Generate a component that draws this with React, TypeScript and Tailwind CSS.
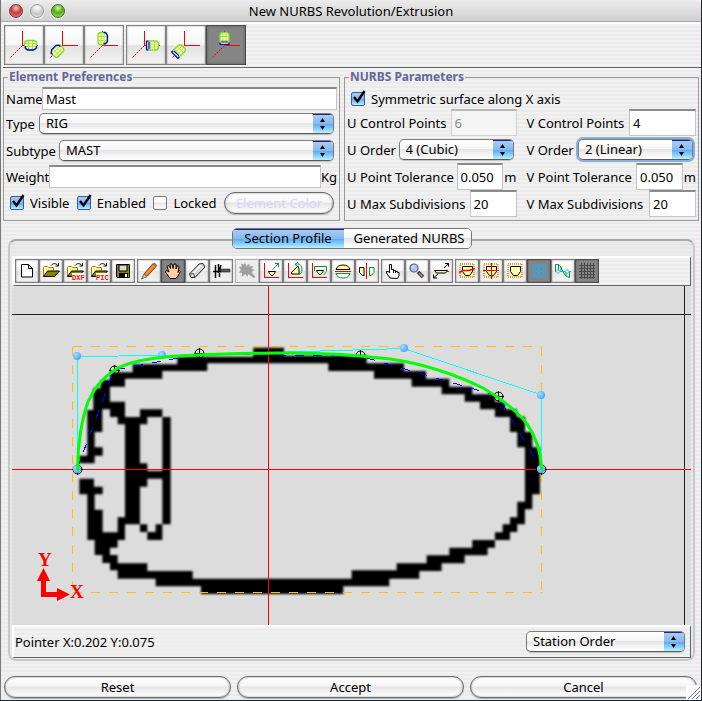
import React, { useState } from "react";

const GLOSS =
  "bg-[linear-gradient(to_bottom,#ffffff_0%,#f6f6f6_45%,#e4e4e4_50%,#f4f4f4_75%,#ffffff_100%)]";
const AQUA =
  "bg-[linear-gradient(to_bottom,#a9cbf0_0%,#86b9f0_48%,#62aaf2_52%,#8cd0ff_78%,#b4f4ff_100%)]";

/* ---------- small form parts ---------- */

function Field({
  label,
  value,
  box,
  unit,
  disabled,
}: {
  label: string;
  value: string;
  box: string;
  unit?: string;
  disabled?: boolean;
}) {
  return (
    <label className="flex h-[27px] items-center justify-between">
      <span className="whitespace-nowrap">{label}</span>
      <span className={`flex h-full items-center ${box}`}>
        <input
          type="text"
          defaultValue={value}
          disabled={disabled}
          className={`h-full w-full min-w-0 flex-1 border border-t-2 px-[3px] pb-px outline-none ${
            disabled
              ? "border-[#d0d0d0] border-t-[#b8b8b8] bg-[#f5f5f5] text-[#8a8a8a]"
              : "border-[#c4c4c4] border-t-[#8a8a8a] bg-white text-black"
          }`}
        />
        {unit && <span className="pl-px">{unit}</span>}
      </span>
    </label>
  );
}

function Popup({
  label,
  options,
  box,
  focused,
}: {
  label: string;
  options: string[];
  box: string;
  focused?: boolean;
}) {
  return (
    <span
      className={`relative flex h-[21px] overflow-hidden rounded-[5px] border border-[#7c7c7c] border-b-[#5a5a5a] ${GLOSS} ${box} ${
        focused ? "ring-2 ring-[#86aede]" : "shadow-[0_1px_1px_rgba(0,0,0,0.2)]"
      }`}
    >
      <select
        aria-label={label}
        className="h-full w-full appearance-none bg-transparent pl-[6px] pr-6 pb-px leading-[18px] outline-none"
      >
        {options.map((o) => (
          <option key={o}>{o}</option>
        ))}
      </select>
      <span
        className={`pointer-events-none absolute inset-y-0 right-0 w-5 border-t border-[#23238a] ${AQUA}`}
      >
        <svg viewBox="0 0 20 18" className="h-[18px] w-5">
          <path d="M9.500 3l2.500 4h-5zM9.500 15l2.500 -4h-5z" fill="#000" />
        </svg>
      </span>
    </span>
  );
}

function Check({ label, on }: { label: string; on?: boolean }) {
  const [checked, setChecked] = useState(!!on);
  return (
    <label className="flex items-center gap-[6px]">
      <span className="relative h-[14px] w-[14px]">
        <input
          type="checkbox"
          checked={checked}
          onChange={() => setChecked(!checked)}
          className={`block h-[14px] w-[14px] appearance-none rounded-[2px] border ${
            checked ? `border-[#3c5c90] ${AQUA}` : `border-[#777777] ${GLOSS}`
          }`}
        />
        {checked && (
          <svg
            viewBox="0 0 16 16"
            className="pointer-events-none absolute -top-[2px] left-0 h-4 w-4"
          >
            <path d="M3 7l3.500 4.500L13.500 1" fill="none" stroke="#000" strokeWidth="2.400" />
          </svg>
        )}
      </span>
      <span className="whitespace-nowrap">{label}</span>
    </label>
  );
}

function Panel({ title, children }: { title: string; children: React.ReactNode }) {
  return (
    <fieldset className="h-[152px] min-w-0 border border-[#999999] px-[2px]">
      <legend className="ml-[2px] px-px text-[12px] font-bold leading-4 text-[#666699]">{title}</legend>
      {children}
    </fieldset>
  );
}

function PushButton({ children, className = "" }: { children: React.ReactNode; className?: string }) {
  return (
    <button
      type="button"
      className={`h-[22px] rounded-full border border-[#6a6a6a] pb-px leading-[18px] shadow-[inset_0_0_2px_#888,0_1px_1px_rgba(0,0,0,0.25)] ${GLOSS} ${className}`}
    >
      {children}
    </button>
  );
}

/* ---------- revolution / extrusion tools ---------- */

function Axes({
  bx,
  by,
  rot,
  cap,
}: {
  bx: number;
  by: number;
  rot: number;
  cap: "side" | "end";
}) {
  return (
    <svg viewBox="1 1 38 38" className="h-full w-full">
      <path d="M18.500 6v15M18.500 20.500H34" stroke="#f00" fill="none" shapeRendering="crispEdges" />
      <path d="M18.500 20.500L6 33" stroke="#f00" strokeDasharray="2 1" />
      <g transform={`translate(${bx} ${by}) rotate(${rot})`}>
        <rect x="-6" y="-4.500" width="12" height="9" rx="3" fill="#ffffa8" stroke="#7ddc28" strokeWidth="1.300" />
        <path d="M-5 -1.500H5M-5 1.500H5M-2 -4V4M2 -4V4" stroke="#8fe040" strokeWidth="0.800" />
        {cap === "side" ? (
          <path d="M-5 1v2l2 2h6l3 -2v-2" stroke="#0000ee" fill="none" strokeWidth="1.300" />
        ) : (
          <path d="M-4 -4.500h-2v9h2M-3.500 -3.500v7" stroke="#0000ee" fill="none" strokeWidth="1.200" />
        )}
      </g>
    </svg>
  );
}

function ShapeTool({
  label,
  on,
  children,
}: {
  label: string;
  on?: boolean;
  children: React.ReactNode;
}) {
  return (
    <button
      type="button"
      aria-label={label}
      aria-pressed={!!on}
      className={`h-10 w-10 border ${
        on
          ? "border-[#4c4c4c] bg-[#858585] shadow-[inset_0_0_3px_#555]"
          : "border-[#828282] bg-[linear-gradient(to_bottom,#ffffff,#f6f6f6_50%,#e2e2e2_52%,#f4f4f4)] shadow-[inset_0_0_2px_#999]"
      }`}
    >
      {children}
    </button>
  );
}

/* ---------- drawing tools ---------- */

function Tool({
  label,
  on,
  disabled,
  children,
}: {
  label: string;
  on?: boolean;
  disabled?: boolean;
  children: React.ReactNode;
}) {
  return (
    <button
      type="button"
      aria-label={label}
      aria-pressed={!!on}
      disabled={disabled}
      className={`h-6 w-6 border ${
        on
          ? "border-[#4c4c4c] bg-[#858585] shadow-[inset_0_0_2px_#555]"
          : disabled
            ? "border-[#b0b0b0] bg-[#ececec]"
            : "border-[#7c7c7c] bg-[linear-gradient(to_bottom,#ffffff,#f6f6f6_50%,#e6e6e6_52%,#f4f4f4)] shadow-[inset_0_0_2px_#888]"
      }`}
    >
      <svg viewBox="1 1 22 22" className="h-full w-full">
        {children}
      </svg>
    </button>
  );
}

const Folder = () => (
  <g>
    <path d="M4.500 17.500v-9l1 -1h3l1 1h5v3" fill="#ffff9c" stroke="#8c8c00" />
    <path d="M4.500 17.500l4 -5.500h12l-5 5.500z" fill="#848400" stroke="#000" />
    <path d="M12 6.500c2 -2.500 5 -2.500 7 0M19.500 4v3h-3" fill="none" stroke="#000" />
  </g>
);

const Tag = ({ children }: { children: string }) => (
  <g>
    <rect x="9" y="14" width="12" height="7" fill="#fff" />
    <text x="9" y="20.500" fontSize="7" fontWeight="bold" fontFamily="Liberation Mono, monospace" fill="#f00">
      {children}
    </text>
  </g>
);

const RedAxes = () => (
  <path d="M5.500 4v14.500H20" fill="none" stroke="#f00" shapeRendering="crispEdges" />
);

const Shield = () => (
  <g>
    <rect x="5" y="5" width="14" height="13" fill="none" stroke="#f0a020" strokeWidth="2" strokeDasharray="1 1" />
    <path d="M7.500 7.500h10v5l-3 4h-4l-3 -4z" fill="#ffff9c" stroke="#000" />
  </g>
);

function DrawingTools() {
  return (
    <div role="toolbar" aria-label="Drawing tools" className="flex gap-[2px]">
      <div className="flex">
        <Tool label="New">
          <path d="M6.500 5.500h7l4 4v8.500h-11zM13.500 5.500v4h4" fill="#fff" stroke="#000" />
        </Tool>
        <Tool label="Open"><Folder /></Tool>
        <Tool label="Import DXF"><Folder /><Tag>DXF</Tag></Tool>
        <Tool label="Import picture"><Folder /><Tag>PIC</Tag></Tool>
        <Tool label="Save">
          <path d="M5.500 5.500h13v13h-12l-1 -1z" fill="#848400" stroke="#000" />
          <path d="M8 6h8v6h-8z" fill="#d8d8d8" stroke="#000" />
          <path d="M8 14h9v4.500h-9z" fill="#000" />
          <path d="M14 15h2v3h-2z" fill="#fff" />
        </Tool>
      </div>
      <div className="flex">
        <Tool label="Pencil">
          <path d="M7 15L16 4.500l3 3L10 17.500z" fill="#e87818" stroke="#8a4a20" />
          <path d="M9 15.500L17 6.500" stroke="#ffb060" />
          <path d="M7 15l-2.500 5l5.500 -2.500z" fill="#e8d0a0" stroke="#666" />
          <path d="M16 4.500l1.500 -1l3 3l-1.500 1z" fill="#707888" />
        </Tool>
        <Tool label="Pan" on>
          <path
            d="M9 19.500l-4.500 -6.500l1 -1.500l2.500 1.500l-2 -5.500l1.500 -1l2 3l-.5 -4.500h2l1 4.500l1 -4.500h2l0 5l1.500 -3.500l1.500 1l-1 6l1.500 -2l1 1l-2.500 4.500l-2 2.500z"
            fill="#ffd0a8"
            stroke="#000"
          />
        </Tool>
        <Tool label="Eraser">
          <path d="M4.500 15L14 5l4 -.5l2 3.500L10 18.500h-4z" fill="#d8d8dc" stroke="#222" />
          <path d="M4.500 15l4 -.5l1.500 4" fill="none" stroke="#555" />
          <path d="M8.500 13.500L16 6" stroke="#fff" strokeWidth="1.500" />
        </Tool>
        <Tool label="Measure">
          <path d="M10 10h11v3h-11z" fill="#555" stroke="#222" strokeWidth="0.600" />
          <path d="M4 12.500h8M6.500 6v13M9.500 5v9M12 6l-1.500 5M10.500 14v4" stroke="#000" strokeWidth="1.500" fill="none" />
        </Tool>
      </div>
      <div className="flex">
        <Tool label="Spray" disabled>
          <path d="M10 4l1.500 3l3 -2.500l0 3l4 -.5l-2 3l3 1l-3 2l4 5l-2 1l-5 -4l-1 3l-2 -3l-4 3l.5 -4l-3 -.5l2 -2.500l-2 -3l3 -.5l-1 -3l3 1z" fill="#a0a0a0" />
        </Tool>
        <Tool label="Scale">
          <RedAxes />
          <path d="M9.500 12.500h7l-1 2l-2 2h-1l-2 -2z" fill="#ffff9c" stroke="#000" />
          <path d="M13.500 10.500l6 -6M16 4.500h3.500v3.500" fill="none" stroke="#009a30" />
        </Tool>
        <Tool label="Rotate">
          <RedAxes />
          <path d="M8 14l7 -7l1 3v5h-7z" fill="#ffff9c" stroke="#000" />
          <path d="M12 5.500c4 -2 7 1 7 5c0 3 -1 4 -3 5M15 3l-3 2.500l3 2" fill="none" stroke="#009a30" />
        </Tool>
        <Tool label="Offset">
          <RedAxes />
          <path d="M7.500 12v-4.500h12v5l-3 3.500" fill="none" stroke="#009a30" />
          <path d="M9.500 11.500h7l-1 2l-2 2h-1l-2 -2z" fill="#ffff9c" stroke="#000" />
        </Tool>
        <Tool label="Mirror vertically">
          <path d="M5 10.500c1 -6 13 -6 14 0z" fill="#ffff9c" stroke="#000" />
          <path d="M5 14.500h14c-1 6 -13 6 -14 0z" fill="#fff" stroke="#009a30" />
          <path d="M4 12.500h16" stroke="#f00" />
        </Tool>
        <Tool label="Mirror horizontally">
          <path d="M4.500 8.500h4.500v8h-1.500l-3 -3z" fill="#ffff9c" stroke="#000" />
          <path d="M14.500 8.500h4.500v5l-3 3h-1.500z" fill="#fff" stroke="#009a30" />
          <path d="M11.500 4v16" stroke="#f00" />
        </Tool>
      </div>
      <div className="flex">
        <Tool label="Select">
          <path d="M9 19l-3.500 -5v-1.500h2l1 1.500v-8.500h2v5h2v1h2v1h2v1h1.500v3l-1.500 3z" fill="#fff" stroke="#000" />
          <path d="M12.500 11v3M14.500 12v2" stroke="#000" />
        </Tool>
        <Tool label="Zoom">
          <path d="M13 13l5 5" stroke="#333" strokeWidth="3.500" />
          <path d="M14 14l3.500 3.500" stroke="#d09850" strokeWidth="1.500" />
          <circle cx="9" cy="9" r="4" fill="#b8c4ec" stroke="#555a78" strokeWidth="1.200" />
          <path d="M7 8.500l2 -2" stroke="#fff" />
        </Tool>
        <Tool label="Zoom to fit">
          <path d="M5.500 11.500h13l-2 2.500h-9z" fill="#ffff9c" stroke="#000" />
          <path d="M15 9l4.500 -4.500M16 4.500h3.500v3M9 15l-4.500 4M4.500 15.500v3.500h3.500" fill="none" stroke="#000" />
          <path d="M17 12.500h3" stroke="#f00" />
        </Tool>
      </div>
      <div className="flex">
        <Tool label="Show profile line"><Shield /><path d="M4 13.500l4 -2h6l6 -2" fill="none" stroke="#f00" strokeWidth="1.500" /></Tool>
        <Tool label="Show axes"><Shield /><path d="M12.500 4v16M4 11.500h16" stroke="#f00" /></Tool>
        <Tool label="Show shape"><Shield /></Tool>
        <Tool label="Show control grid" on>
          <path d="M5 7h14M5 12h14M5 17h14M7 5v14M12 5v14M17 5v14" stroke="#18b0ff" />
          <path d="M7 5l2 2l-2 2l-2 -2zM12 5l2 2l-2 2l-2 -2zM17 5l2 2l-2 2l-2 -2zM7 10l2 2l-2 2l-2 -2zM12 10l2 2l-2 2l-2 -2zM17 10l2 2l-2 2l-2 -2zM7 15l2 2l-2 2l-2 -2zM12 15l2 2l-2 2l-2 -2zM17 15l2 2l-2 2l-2 -2z" fill="#858585" stroke="#18b0ff" />
        </Tool>
        <Tool label="Show curvature">
          <path d="M4.500 12v-6.500h3c2 1 3 4 4.500 7s3 5.500 6.500 6v-6M7.500 6v6M10 8v4M15 13v4" fill="none" stroke="#009a30" />
          <path d="M4 12.500h16" stroke="#18b0ff" />
          <path d="M7 10.500l2 2l-2 2l-2 -2zM16 10.500l2 2l-2 2l-2 -2z" fill="#fff" stroke="#18b0ff" />
        </Tool>
        <Tool label="Show grid" on>
          <path d="M4 6.500h16M4 9.500h16M4 12.500h16M4 15.500h16M4 18.500h16M6.500 4v16M9.500 4v16M12.500 4v16M15.500 4v16M18.500 4v16" stroke="#4a4a4a" shapeRendering="crispEdges" />
        </Tool>
      </div>
    </div>
  );
}

/* ---------- section profile view ---------- */

// Scanned mast section, traced at three units per drawing unit:
// outer wall, main chamber, then the two slots of the sail track.
const SCAN =
  "M208 385V362H232V225H250V160H272V135H300V112H368V88H502V65H730V38H822V62H1070V85H1182V108H1248V131H1318V155H1387V178H1455V200H1485V223H1520V245H1545V291H1567V337H1590V478H1567V523H1545V568H1522V591H1500V615H1455V638H1433V661H1364V685H1295V708H1228V731H1138V754H1000V777H573V754H437V731H323V706H300V684H277V660H254V615H232V478H208V431H252V455H278V478H254V524H278V592H323V547H345V268H323V246H300V223H277V291H254V337H278V362H254V385Z" +
  "M300 155V200H345V246H390V223H457V246H482V568H457V615H412V591H390V568H345V615H323V638H300V660H323V685H412V708H548V731H1025V706H1160V685H1250V661H1318V638H1387V615H1455V592H1478V568H1500V547H1522V500H1545V337H1522V291H1500V246H1455V223H1410V200H1364V178H1295V155H1205V131H1092V108H955V85H592V108H457V131H345V155Z" +
  "M412 246V268H390V385H412V408H457V246Z" +
  "M412 431H457V568H437V591H412V568H390V455H412Z";

const KNOTS = [
  [77, 469],
  [114, 370],
  [199, 353],
  [360, 355],
  [498, 396],
  [541, 469],
];
const HANDLES = [
  [77, 356],
  [162, 355],
  [404, 348],
  [541, 395],
  [77, 469],
  [541, 469],
];

function ProfileView() {
  return (
    <svg viewBox="12 286 679 339" className="block w-full bg-[#dcdcdc]" role="img" aria-label="Section profile">
      <defs>
        <filter id="scan" x="-5%" y="-5%" width="110%" height="110%">
          <feGaussianBlur stdDeviation="3" />
        </filter>
        <radialGradient id="bead" cx="0.350" cy="0.350" r="0.700">
          <stop offset="0" stopColor="#a0e0ff" />
          <stop offset="1" stopColor="#4ca0ff" />
        </radialGradient>
      </defs>
      <path d={SCAN} transform="translate(10 335) scale(0.3333)" filter="url(#scan)" fillRule="evenodd" />
      <g fill="none" shapeRendering="crispEdges">
        <path d="M72.500 346.500H541.500M72.500 592.500H541.500" stroke="#ffc000" strokeDasharray="9 9" />
        <path d="M72.500 346.500V592.500M541.500 346.500V592.500" stroke="#ffc000" strokeDasharray="9 9" />
        <path d="M12 314.500H691M684.500 286V625" stroke="#222222" />
        <path d="M77.500 469V356.500L162 355.500L270 352.500L404 348.500L541.500 395V469" stroke="#00ffff" />
        <path d="M77 469L114 370L200 354L360 356L498 396L541 469" stroke="#0000ff" strokeDasharray="9 9" />
        <path d="M12 469.500H691M268.500 286V625" stroke="#ff0000" />
      </g>
      {KNOTS.map(([x, y]) => (
        <g key={x} transform={`translate(${x} ${y})`} fill="none" stroke="#000">
          <circle cx="0.500" cy="0.500" r="4.500" />
          <path d="M0.500 -5v11M-5 0.500h11" />
        </g>
      ))}
      {HANDLES.map(([x, y]) => (
        <circle key={`${x}-${y}`} cx={x} cy={y} r="4" fill="url(#bead)" />
      ))}
      <path
        d="M77.500 470C77.500 445 82 418 88 402C94 388 103 378 113 371C125 363 140 360 157 358C190 354 230 353.500 276 353C310 352.500 350 354 390 359C420 363 455 374 483 388C500 398 514 409 524 420C535 434 541 450 541.500 470"
        fill="none"
        stroke="#00ff00"
        strokeWidth="3"
      />
      <g fill="#ff0000" fontFamily="Liberation Serif, serif" fontSize="19" fontWeight="bold">
        <path d="M41 596V581H37L43.500 568L50 581H46V592H57V588L70 594.500L57 601V597H41Z" />
        <text x="38" y="566">Y</text>
        <text x="70" y="598">X</text>
      </g>
    </svg>
  );
}

/* ---------- window ---------- */

const Light = ({ label, tone }: { label: string; tone: string }) => (
  <button
    type="button"
    aria-label={label}
    className={`h-[14px] w-[14px] rounded-full border shadow-[0_1px_1px_#ffffff] ${tone}`}
  />
);

export default function App() {
  return (
    <div className="bg-[#16283c] pb-[2px] pr-px font-['Noto_Sans','Lucida_Grande',sans-serif] text-[13px] leading-4 text-black">
      <div className="relative border-l border-[#777777] bg-[repeating-linear-gradient(to_bottom,#f1f1f1_0px,#f1f1f1_2px,#ebebeb_2px,#ebebeb_4px)]">
        <header className="grid h-[22px] grid-cols-[1fr_auto_1fr] items-center rounded-t-md border-b border-[#a8a8a8] bg-[linear-gradient(to_bottom,#ececec,#cfcfcf)] px-2">
          <div className="flex gap-[7px]">
            <Light label="Close" tone="border-[#7a3a3a] bg-[radial-gradient(circle_at_50%_25%,#f8c8c0,#c84040_45%,#e88080)]" />
            <Light label="Minimize" tone="border-[#999999] bg-[radial-gradient(circle_at_50%_20%,#ffffff,#c8c8c8_60%,#e8e8e8)]" />
            <Light label="Zoom window" tone="border-[#3c6a20] bg-[radial-gradient(circle_at_50%_25%,#d8f8b0,#58a818_45%,#a8e868)]" />
          </div>
          <h1 className="whitespace-nowrap">New NURBS Revolution/Extrusion</h1>
        </header>

        <div
          role="toolbar"
          aria-label="Surface type"
          className="ml-[2px] flex h-[46px] gap-[2px] border-b border-[#666666] border-t-2 border-t-white pl-px pt-px"
        >
          <div className="flex">
            <ShapeTool label="Revolve about X"><Axes bx={26.5} by={20} rot={0} cap="side" /></ShapeTool>
            <ShapeTool label="Revolve about Z"><Axes bx={13.5} by={26} rot={135} cap="side" /></ShapeTool>
            <ShapeTool label="Revolve about Y"><Axes bx={18.5} by={13.5} rot={-90} cap="side" /></ShapeTool>
          </div>
          <div className="flex">
            <ShapeTool label="Extrude along X"><Axes bx={26.5} by={20.5} rot={0} cap="end" /></ShapeTool>
            <ShapeTool label="Extrude along Z"><Axes bx={13} by={26} rot={-45} cap="end" /></ShapeTool>
            <ShapeTool label="Extrude along Y" on><Axes bx={18.5} by={13.5} rot={-90} cap="end" /></ShapeTool>
          </div>
        </div>

        <div className="grid grid-cols-[337fr_355fr] gap-1 px-[2px] pt-px">
          <Panel title="Element Preferences">
            <div className="flex flex-col pt-[2px]">
              <label className="flex h-[23px] items-center">
                <span className="w-9 whitespace-nowrap">Name</span>
                <input
                  type="text"
                  defaultValue="Mast"
                  className="h-[23px] min-w-0 flex-1 border border-t-2 border-[#c4c4c4] border-t-[#8a8a8a] bg-white px-[3px] pb-px outline-none"
                />
              </label>
              <div className="flex h-[27px] items-center pr-[3px]">
                <span className="w-[33px]">Type</span>
                <Popup label="Type" options={["RIG"]} box="flex-1" />
              </div>
              <div className="flex h-[27px] items-center pr-[3px]">
                <span className="w-[53px]">Subtype</span>
                <Popup label="Subtype" options={["MAST"]} box="flex-1" />
              </div>
              <label className="flex h-[25px] items-center">
                <span className="w-[43px] whitespace-nowrap">Weight</span>
                <input
                  type="text"
                  className="h-[23px] min-w-0 flex-1 border border-t-2 border-[#c4c4c4] border-t-[#8a8a8a] bg-white px-[3px] outline-none"
                />
                <span className="w-4">Kg</span>
              </label>
              <div className="flex h-[28px] items-center justify-between pl-1 pr-[3px]">
                <Check label="Visible" on />
                <Check label="Enabled" on />
                <Check label="Locked" />
                <PushButton className="w-[110px] text-[#d4d4f8]">Element Color</PushButton>
              </div>
            </div>
          </Panel>

          <Panel title="NURBS Parameters">
            <div className="flex h-6 items-end pb-[2px] pl-1">
              <Check label="Symmetric surface along X axis" on />
            </div>
            <div className="grid grid-cols-2 gap-x-[10px]">
              <Field label="U Control Points" value="6" box="w-[66px]" disabled />
              <Field label="V Control Points" value="4" box="w-[67px]" />
              <div className="flex h-[27px] items-center justify-between pr-[3px]">
                <span className="whitespace-nowrap">U Order</span>
                <Popup label="U Order" options={["4 (Cubic)"]} box="w-[115px]" />
              </div>
              <div className="flex h-[27px] items-center justify-between pr-[3px]">
                <span className="whitespace-nowrap">V Order</span>
                <Popup label="V Order" options={["2 (Linear)"]} box="w-[115px]" focused />
              </div>
              <Field label="U Point Tolerance" value="0.050" box="w-[60px]" unit="m" />
              <Field label="V Point Tolerance" value="0.050" box="w-[60px]" unit="m" />
              <Field label="U Max Subdivisions" value="20" box="w-[47px]" />
              <Field label="V Max Subdivisions" value="20" box="w-[47px]" />
            </div>
          </Panel>
        </div>

        <main className="pl-[7px] pr-[6px] pt-[7px]">
          <div role="tablist" className="relative z-10 mx-auto flex h-[21px] w-[240px] overflow-hidden rounded-[5px] border border-[#777777]">
            <button type="button" role="tab" aria-selected="true" className={`w-[111px] border-t border-[#23238a] pb-[2px] ${AQUA}`}>
              Section Profile
            </button>
            <button type="button" role="tab" aria-selected="false" className={`flex-1 pb-px pl-1 ${GLOSS}`}>
              Generated NURBS
            </button>
          </div>
          <section className="-mt-[10px] rounded-lg border-2 border-[#c8c8c8] border-t-[#a8a8a8] bg-[repeating-linear-gradient(to_bottom,#ebebeb_0px,#ebebeb_2px,#e5e5e5_2px,#e5e5e5_4px)] px-[2px] pb-px pt-[15px]">
            <div className="border-b border-l-[3px] border-r border-t-2 border-b-[#666666] border-l-white border-r-[#666666] border-t-white bg-[repeating-linear-gradient(to_bottom,#f1f1f1_0px,#f1f1f1_2px,#ebebeb_2px,#ebebeb_4px)] pb-[2px] pt-px">
              <DrawingTools />
            </div>
            <ProfileView />
            <div className="flex h-[33px] items-center justify-between border-b border-l-2 border-r border-t-2 border-b-[#666666] border-l-white border-r-[#666666] border-t-white bg-[repeating-linear-gradient(to_bottom,#f1f1f1_0px,#f1f1f1_2px,#ebebeb_2px,#ebebeb_4px)] pb-px pl-px pr-[5px]">
              <output>Pointer X:0.202 Y:0.075</output>
              <Popup label="Point order" options={["Station Order"]} box="w-[159px]" />
            </div>
          </section>
        </main>

        <footer className="grid grid-cols-3 gap-[6px] pb-[2px] pl-[3px] pr-1 pt-[15px]">
          <PushButton>Reset</PushButton>
          <PushButton>Accept</PushButton>
          <PushButton>Cancel</PushButton>
        </footer>
        <svg viewBox="0 0 15 15" className="absolute bottom-0 right-0 h-[15px] w-[15px] bg-white">
          <path d="M2 14L14 2M6 14L14 6M10 14L14 10" stroke="#777777" />
        </svg>
      </div>
    </div>
  );
}
